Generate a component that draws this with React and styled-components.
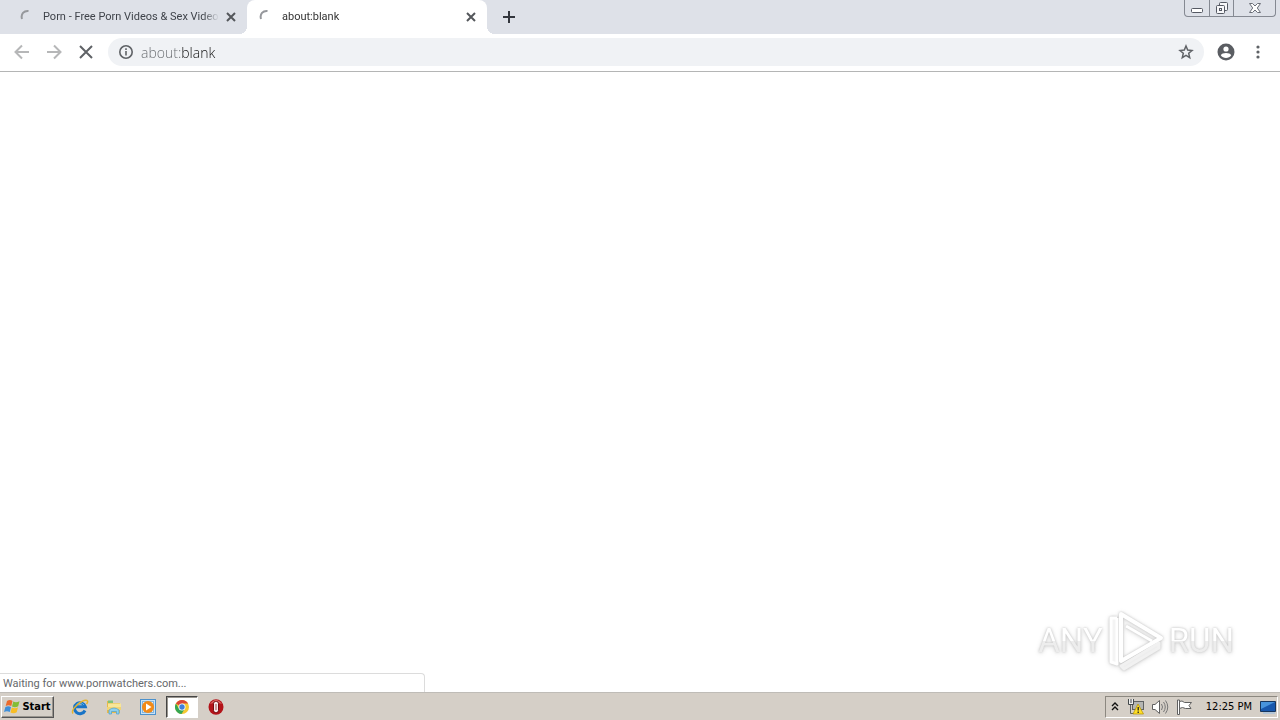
import React from "react";
import styled, { createGlobalStyle, css } from "styled-components";

const GlobalStyle = createGlobalStyle`
  *, *::before, *::after { box-sizing: border-box; }
  body { margin: 0; background: #fff; font-family: Roboto, "Noto Sans", sans-serif; }
  button, input { font: inherit; }
  svg { display: block; flex: none; }
`;

const Desktop = styled.div`
  display: flex;
  flex-direction: column;
  height: 100vh;
  overflow: hidden;
`;

const plainButton = css`
  display: flex;
  align-items: center;
  justify-content: center;
  flex: none;
  padding: 0;
  border: 0;
  background: transparent;
`;

const TabStrip = styled.header`
  display: flex;
  align-items: flex-start;
  flex: none;
  height: 34px;
  background: #dee1e8;
`;

const Tab = styled.div`
  position: relative;
  display: flex;
  align-items: center;
  flex: none;
  width: ${(p) => (p.$active ? 240 : 247)}px;
  height: 34px;
  padding: 0 8px 0 ${(p) => (p.$active ? 12 : 20)}px;
  border-radius: 8px 8px 0 0;
  background: ${(p) => (p.$active ? "#fff" : "transparent")};
  color: ${(p) => (p.$active ? "#333" : "#3f434a")};
  ${(p) =>
    p.$active &&
    css`
      &::before,
      &::after {
        content: "";
        position: absolute;
        bottom: 0;
        width: 8px;
        height: 8px;
      }
      &::before {
        left: -8px;
        background: radial-gradient(circle at 0 0, transparent 8px, #fff 8px);
      }
      &::after {
        right: -8px;
        background: radial-gradient(circle at 100% 0, transparent 8px, #fff 8px);
      }
    `}
`;

const TabTitle = styled.span`
  flex: 1;
  min-width: 0;
  margin-left: 7px;
  overflow: hidden;
  white-space: nowrap;
  font-size: 11px;
  line-height: 16px;
  mask-image: linear-gradient(to right, #000 calc(100% - 16px), transparent);
`;

const TabClose = styled.button`
  ${plainButton}
  width: 16px;
  height: 16px;
  margin-left: 4px;
  color: #54575b;
`;

const NewTab = styled.button`
  ${plainButton}
  width: 28px;
  height: 34px;
  margin-left: 8px;
  color: #33363d;
`;

const WindowButtons = styled.div`
  display: flex;
  height: 17px;
  margin: 0 4px 0 auto;
  border: 1px solid #858992;
  border-top: 0;
  border-radius: 0 0 4px 4px;
`;

const WindowButton = styled.button`
  ${plainButton}
  width: ${(p) => (p.$wide ? 42 : 24)}px;
  height: 16px;
  & + & { border-left: 1px solid #858992; }
`;

const Toolbar = styled.nav`
  display: flex;
  align-items: center;
  flex: none;
  height: 38px;
  padding: 0 6px 1px;
  border-bottom: 1px solid #b4b5b5;
  background: #fff;
`;

const ToolButton = styled.button`
  ${plainButton}
  width: 32px;
  height: 32px;
  color: ${(p) => (p.disabled ? "#b6b7b8" : "#5f6266")};
`;

const AddressBar = styled.form`
  display: flex;
  align-items: center;
  flex: 1;
  min-width: 0;
  height: 28px;
  margin: 0 6px;
  padding: 0 10px;
  border-radius: 14px;
  background: #f0f2f5;
  color: #5f6266;
`;

const AddressInput = styled.input`
  flex: 1;
  min-width: 0;
  height: 24px;
  margin: 0 7px;
  padding: 0;
  border: 0;
  outline: 0;
  font-family: "Open Sans", sans-serif;
  font-size: 14px;
  font-weight: 300;
  color: transparent;
  background: linear-gradient(to right, #65696d 41px, #111 41px);
  background-clip: text;
  -webkit-text-fill-color: transparent;
`;

const Viewport = styled.main`
  position: relative;
  flex: 1;
  min-height: 0;
  background: #fff;
`;

const StatusBubble = styled.div`
  position: absolute;
  left: 0;
  bottom: 0;
  width: 425px;
  max-width: 100%;
  height: 19px;
  padding: 0 3px;
  border: 1px solid #dcdcdc;
  border-left: 0;
  border-bottom: 0;
  border-radius: 0 4px 0 0;
  font-size: 11px;
  line-height: 19px;
  color: #66686b;
`;

const Watermark = styled.div`
  position: absolute;
  right: 46px;
  bottom: 20px;
  display: flex;
  align-items: center;
  gap: 4px;
  color: #fff;
  filter: drop-shadow(0 0 1px #c4c4c4) drop-shadow(0 1px 2px #dedede);
`;

const WatermarkWord = styled.span`
  font-family: Roboto, "Liberation Sans", sans-serif;
  font-size: 33px;
  line-height: 44px;
  background: linear-gradient(#fff 50%, #ededed 50%);
  background-clip: text;
  -webkit-text-fill-color: transparent;
`;

const Taskbar = styled.footer`
  display: flex;
  align-items: center;
  flex: none;
  height: 28px;
  padding: 0 2px 0 1px;
  border-top: 1px solid #bfbcb7;
  background: #d5cfc7;
`;

const StartButton = styled.button`
  ${plainButton}
  gap: 1px;
  width: 53px;
  height: 22px;
  margin-right: 8px;
  border: 1px solid;
  border-color: #fff #555 #555 #fff;
  box-shadow: inset -1px -1px #99958e;
  font-family: "DejaVu Sans Condensed", "DejaVu Sans", sans-serif;
  font-size: 11px;
  font-weight: 700;
  color: #000;
`;

const TaskButton = styled.button`
  ${plainButton}
  width: 32px;
  height: 22px;
  margin-left: 2px;
  border: 1px solid transparent;
  ${(p) =>
    p.$pressed &&
    css`
      border-color: #444 #fff #fff #444;
      background: #fff;
      box-shadow: inset 1px 1px #99958e;
    `}
`;

const Tray = styled.div`
  display: flex;
  align-items: center;
  height: 22px;
  margin-left: auto;
  padding: 0 1px 0 4px;
  border: 1px solid;
  border-color: #8c8880 #fff #fff #8c8880;
`;

const TrayButton = styled.button`
  ${plainButton}
  width: 24px;
  height: 20px;
`;

const OverflowButton = styled(TrayButton)`
  width: 10px;
  margin-right: 4px;
`;

const Clock = styled.time`
  margin: 0 8px 0 10px;
  font-family: "DejaVu Sans Condensed", "DejaVu Sans", sans-serif;
  font-size: 11px;
  line-height: 20px;
  white-space: nowrap;
  color: #000;
`;

const Spinner = () => (
  <svg width="16" height="16" viewBox="0 0 16 16" fill="none" stroke="#96989c" strokeWidth="2">
    <path d="M2 10C0.500 5 4 1.500 8.500 2" />
  </svg>
);

const Cross = ({ size, inset, width }) => (
  <svg width={size} height={size} viewBox="0 0 16 16" stroke="currentColor" strokeWidth={width}>
    <path d={`M${inset} ${inset}L${16 - inset} ${16 - inset}M${16 - inset} ${inset}L${inset} ${16 - inset}`} />
  </svg>
);

const Arrow = ({ forward }) => (
  <svg width="16" height="16" viewBox="0 0 16 16" fill="none" stroke="currentColor" strokeWidth="2">
    <path d={forward ? "M1 8H14M8 1.500L14.500 8L8 14.500" : "M15 8H2M8 1.500L1.500 8L8 14.500"} />
  </svg>
);

const InfoIcon = () => (
  <svg width="16" height="16" viewBox="0 0 16 16" fill="none" stroke="currentColor" strokeWidth="1.600">
    <circle cx="8" cy="8" r="6.200" />
    <path d="M8 7V11.500M8 4.200V5.900" />
  </svg>
);

const StarIcon = () => (
  <svg width="16" height="16" viewBox="0 0 16 16" fill="none" stroke="currentColor" strokeWidth="1.500">
    <path d="M8 2L9.700 6.100L14 6.500L10.700 9.300L11.700 13.600L8 11.300L4.300 13.600L5.300 9.300L2 6.500L6.300 6.100Z" />
  </svg>
);

const ProfileIcon = () => (
  <svg width="18" height="18" viewBox="0 0 18 18">
    <circle cx="9" cy="9" r="8.500" fill="#5a5d62" />
    <circle cx="9" cy="6" r="2.600" fill="#fff" />
    <path d="M3.800 12.300C5 9.300 13 9.300 14.200 12.300C12 15.800 6 15.800 3.800 12.300Z" fill="#fff" />
  </svg>
);

const MenuIcon = () => (
  <svg width="16" height="16" viewBox="0 0 16 16" fill="currentColor">
    <circle cx="8" cy="3" r="1.600" /><circle cx="8" cy="8" r="1.600" /><circle cx="8" cy="13" r="1.600" />
  </svg>
);

const MinimizeIcon = () => (
  <svg width="14" height="14" viewBox="0 0 14 14"><rect x="1.500" y="7.500" width="11" height="4" rx="1" fill="#fff" stroke="#555963" /></svg>
);

const RestoreIcon = () => (
  <svg width="14" height="14" viewBox="0 0 14 14" fill="#f7f7f9" stroke="#555963">
    <rect x="4.500" y="1.500" width="8" height="8" rx="1" />
    <rect x="1.500" y="4.500" width="8" height="8" rx="1" />
    <rect x="4.500" y="7.500" width="2" height="2" />
  </svg>
);

const CloseWindowIcon = () => (
  <svg width="14" height="14" viewBox="0 0 14 14" fill="#fff" stroke="#6b6f78">
    <path d="M1.500 2.500H4.500L7 5L9.500 2.500H12.500L9.300 7L12.500 11.500H9.500L7 9L4.500 11.500H1.500L4.700 7Z" />
  </svg>
);

const PlayLogo = () => (
  <svg width="58" height="62" viewBox="0 0 58 62" fill="none" stroke="#fff" strokeWidth="4" strokeLinejoin="round">
    <path d="M10 8H4V52L10 54V8" fill="#f4f4f4" strokeWidth="3" />
    <path d="M14 56L52 33V38L17 59Z" fill="#eee" stroke="#f1f1f1" strokeWidth="3" />
    <path d="M14 4L54 28L14 51Z" />
    <path d="M19 16L45 31" strokeWidth="3" />
  </svg>
);

const WindowsLogo = () => (
  <svg width="17" height="16" viewBox="0 0 17 16">
    <path d="M3 2Q6 0 8.500 2L7.300 7Q4.500 5.500 1.700 7Z" fill="#eb6b2d" />
    <path d="M9.300 2.500Q12 4 15.500 2.200L14.200 7.300Q11 9 8 7.400Z" fill="#83bd35" />
    <path d="M1.400 8Q4.300 6.500 7 8L5.800 13Q3 11.300 0 13Z" fill="#3f8fd9" />
    <path d="M7.800 8.400Q11 10 14 8.300L12.700 13.300Q9.500 15 6.500 13.400Z" fill="#f8bd25" />
  </svg>
);

const ExplorerIcon = () => (
  <svg width="18" height="18" viewBox="0 0 18 18" fill="none">
    <path d="M14 12.500A5.500 5.500 0 1 1 14.300 8.700H5" stroke="#1974c6" strokeWidth="3" />
    <path d="M5 7.500C7 4 11 4 13 7" stroke="#55b8f0" />
    <path d="M2 15.500C-1 11 12 1 16 2.500Q17.500 3.500 15.500 6" stroke="#e6b42c" strokeWidth="1.500" />
  </svg>
);

const FolderIcon = () => (
  <svg width="18" height="18" viewBox="0 0 18 18">
    <path d="M2 3H7L8 5H15V15H2Z" fill="#e5b94c" />
    <path d="M3 2.500H8V5H3Z" fill="#7fc277" />
    <path d="M3 5.500H16V11H3Z" fill="#f8e697" />
    <path d="M2 9H16V12H2Z" fill="#f2d474" />
    <path d="M4 16V12Q9 8 14 12V16H11.500V13.500H6.500V16Z" fill="#8ed0ed" stroke="#4ba1d0" strokeWidth="0.700" />
  </svg>
);

const MediaIcon = () => (
  <svg width="18" height="18" viewBox="0 0 18 18">
    <rect x="1.500" y="1.500" width="15" height="15" fill="#c8e2f7" stroke="#4c91cc" />
    <rect x="3.500" y="3.500" width="11" height="11" fill="#e9f4fc" stroke="#82b5de" />
    <circle cx="9" cy="9" r="6" fill="#f28a18" />
    <path d="M7 5.500L12.500 9L7 12.500Z" fill="#fff" />
  </svg>
);

const ChromeIcon = () => (
  <svg width="16" height="16" viewBox="0 0 16 16">
    <circle cx="8" cy="8" r="7" fill="#f5c832" />
    <path d="M8 8L1.900 4.500A7 7 0 0 1 14.100 4.500H8Z" fill="#dc4638" />
    <path d="M8 8L4.800 9.500L1.900 4.500A7 7 0 0 0 7.500 15L10.800 9.700Z" fill="#35a653" />
    <circle cx="8" cy="8" r="3.500" fill="#fff" /><circle cx="8" cy="8" r="2.700" fill="#427fdb" />
  </svg>
);

const OperaIcon = () => (
  <svg width="16" height="18" viewBox="0 0 16 18">
    <ellipse cx="8" cy="9" rx="7.500" ry="7.800" fill="#b31319" />
    <path d="M2 6Q8 -2 14 6Q8 3 2 6Z" fill="#dd6664" />
    <rect x="5.500" y="3.500" width="5" height="11" rx="2" fill="#f4e9e9" stroke="#79080d" />
    <path d="M8 6V12" stroke="#a84a4d" strokeWidth="1" />
  </svg>
);

const ChevronsIcon = () => (
  <svg width="8" height="10" viewBox="0 0 8 10" fill="none" stroke="#111" strokeWidth="1.400">
    <path d="M1 4L4 1L7 4M1 8L4 5L7 8" />
  </svg>
);

const NetworkIcon = () => (
  <svg width="18" height="18" viewBox="0 0 18 18">
    <rect x="5.500" y="3.500" width="11" height="8" fill="#b5b6b3" stroke="#606263" />
    <path d="M8 13.500H14M3.500 5V15.500H7" fill="none" stroke="#606263" />
    <path d="M1.500 1V6.500H6.500V1M4 1V5" fill="#eee" stroke="#44494a" />
    <path d="M11 6L16.500 16H6Z" fill="#ffdf26" stroke="#b28e00" strokeWidth="0.700" />
    <path d="M11.200 9V12.500M11.200 13.500V15" stroke="#222" strokeWidth="1.300" />
  </svg>
);

const SpeakerIcon = () => (
  <svg width="18" height="18" viewBox="0 0 18 18" fill="none" stroke="#777">
    <path d="M1.500 6.500H4L8.500 2.500V15.500L4 11.500H1.500Z" fill="#fff" stroke="#606060" />
    <path d="M10.500 6Q12.500 9 10.500 12M12.500 4Q16 9 12.500 14M14.500 2.500Q19 9 14.500 15.500" />
  </svg>
);

const FlagIcon = () => (
  <svg width="18" height="18" viewBox="0 0 18 18" fill="#fff" stroke="#606060">
    <path d="M2.500 2V16.500H4.500V2Z" />
    <path d="M4.500 3.500Q7 2 9.500 4.500H16.500L14 7.500L16 10.500H10.500Q7.500 8.500 4.500 10.500Z" />
  </svg>
);

const DesktopIcon = () => (
  <svg width="16" height="16" viewBox="0 0 16 16">
    <path d="M0.500 2.500H15.500V12.500H0.500Z" fill="#1858ad" stroke="#17365d" />
    <path d="M1 3H15L1 10Z" fill="#4894dc" />
    <path d="M3 14H15" stroke="#b3c6d8" strokeWidth="2" />
  </svg>
);

const tabs = [
  { title: "Porn - Free Porn Videos & Sex Videos", active: false },
  { title: "about:blank", active: true },
];

const launchers = [
  { name: "Internet Explorer", Icon: ExplorerIcon },
  { name: "Windows Explorer", Icon: FolderIcon },
  { name: "Media Player", Icon: MediaIcon },
  { name: "Chrome", Icon: ChromeIcon, pressed: true },
  { name: "Opera", Icon: OperaIcon },
];

export default function App() {
  return (
    <Desktop>
      <GlobalStyle />
      <TabStrip>
        {tabs.map((tab) => (
          <Tab key={tab.title} $active={tab.active}>
            <Spinner />
            <TabTitle>{tab.title}</TabTitle>
            <TabClose aria-label="Close tab"><Cross size={16} inset={4} width={2} /></TabClose>
          </Tab>
        ))}
        <NewTab aria-label="New tab">
          <svg width="14" height="14" viewBox="0 0 14 14" stroke="currentColor" strokeWidth="2"><path d="M7 1V13M1 7H13" /></svg>
        </NewTab>
        <WindowButtons>
          <WindowButton aria-label="Minimize"><MinimizeIcon /></WindowButton>
          <WindowButton aria-label="Restore"><RestoreIcon /></WindowButton>
          <WindowButton aria-label="Close" $wide><CloseWindowIcon /></WindowButton>
        </WindowButtons>
      </TabStrip>
      <Toolbar>
        <ToolButton aria-label="Back" disabled><Arrow /></ToolButton>
        <ToolButton aria-label="Forward" disabled><Arrow forward /></ToolButton>
        <ToolButton aria-label="Stop"><Cross size={16} inset={2} width={2} /></ToolButton>
        <AddressBar>
          <InfoIcon />
          <AddressInput type="text" aria-label="Address" defaultValue="about:blank" spellCheck={false} />
          <StarIcon />
        </AddressBar>
        <ToolButton aria-label="Profile"><ProfileIcon /></ToolButton>
        <ToolButton aria-label="Menu"><MenuIcon /></ToolButton>
      </Toolbar>
      <Viewport>
        <StatusBubble role="status">Waiting for www.pornwatchers.com...</StatusBubble>
        <Watermark>
          <WatermarkWord>ANY</WatermarkWord>
          <PlayLogo />
          <WatermarkWord>RUN</WatermarkWord>
        </Watermark>
      </Viewport>
      <Taskbar>
        <StartButton><WindowsLogo />Start</StartButton>
        {launchers.map(({ name, Icon, pressed }) => (
          <TaskButton key={name} aria-label={name} $pressed={pressed}><Icon /></TaskButton>
        ))}
        <Tray>
          <OverflowButton aria-label="Show hidden icons"><ChevronsIcon /></OverflowButton>
          <TrayButton aria-label="Network"><NetworkIcon /></TrayButton>
          <TrayButton aria-label="Volume"><SpeakerIcon /></TrayButton>
          <TrayButton aria-label="Action Center"><FlagIcon /></TrayButton>
          <Clock>12:25 PM</Clock>
          <DesktopIcon />
        </Tray>
      </Taskbar>
    </Desktop>
  );
}
